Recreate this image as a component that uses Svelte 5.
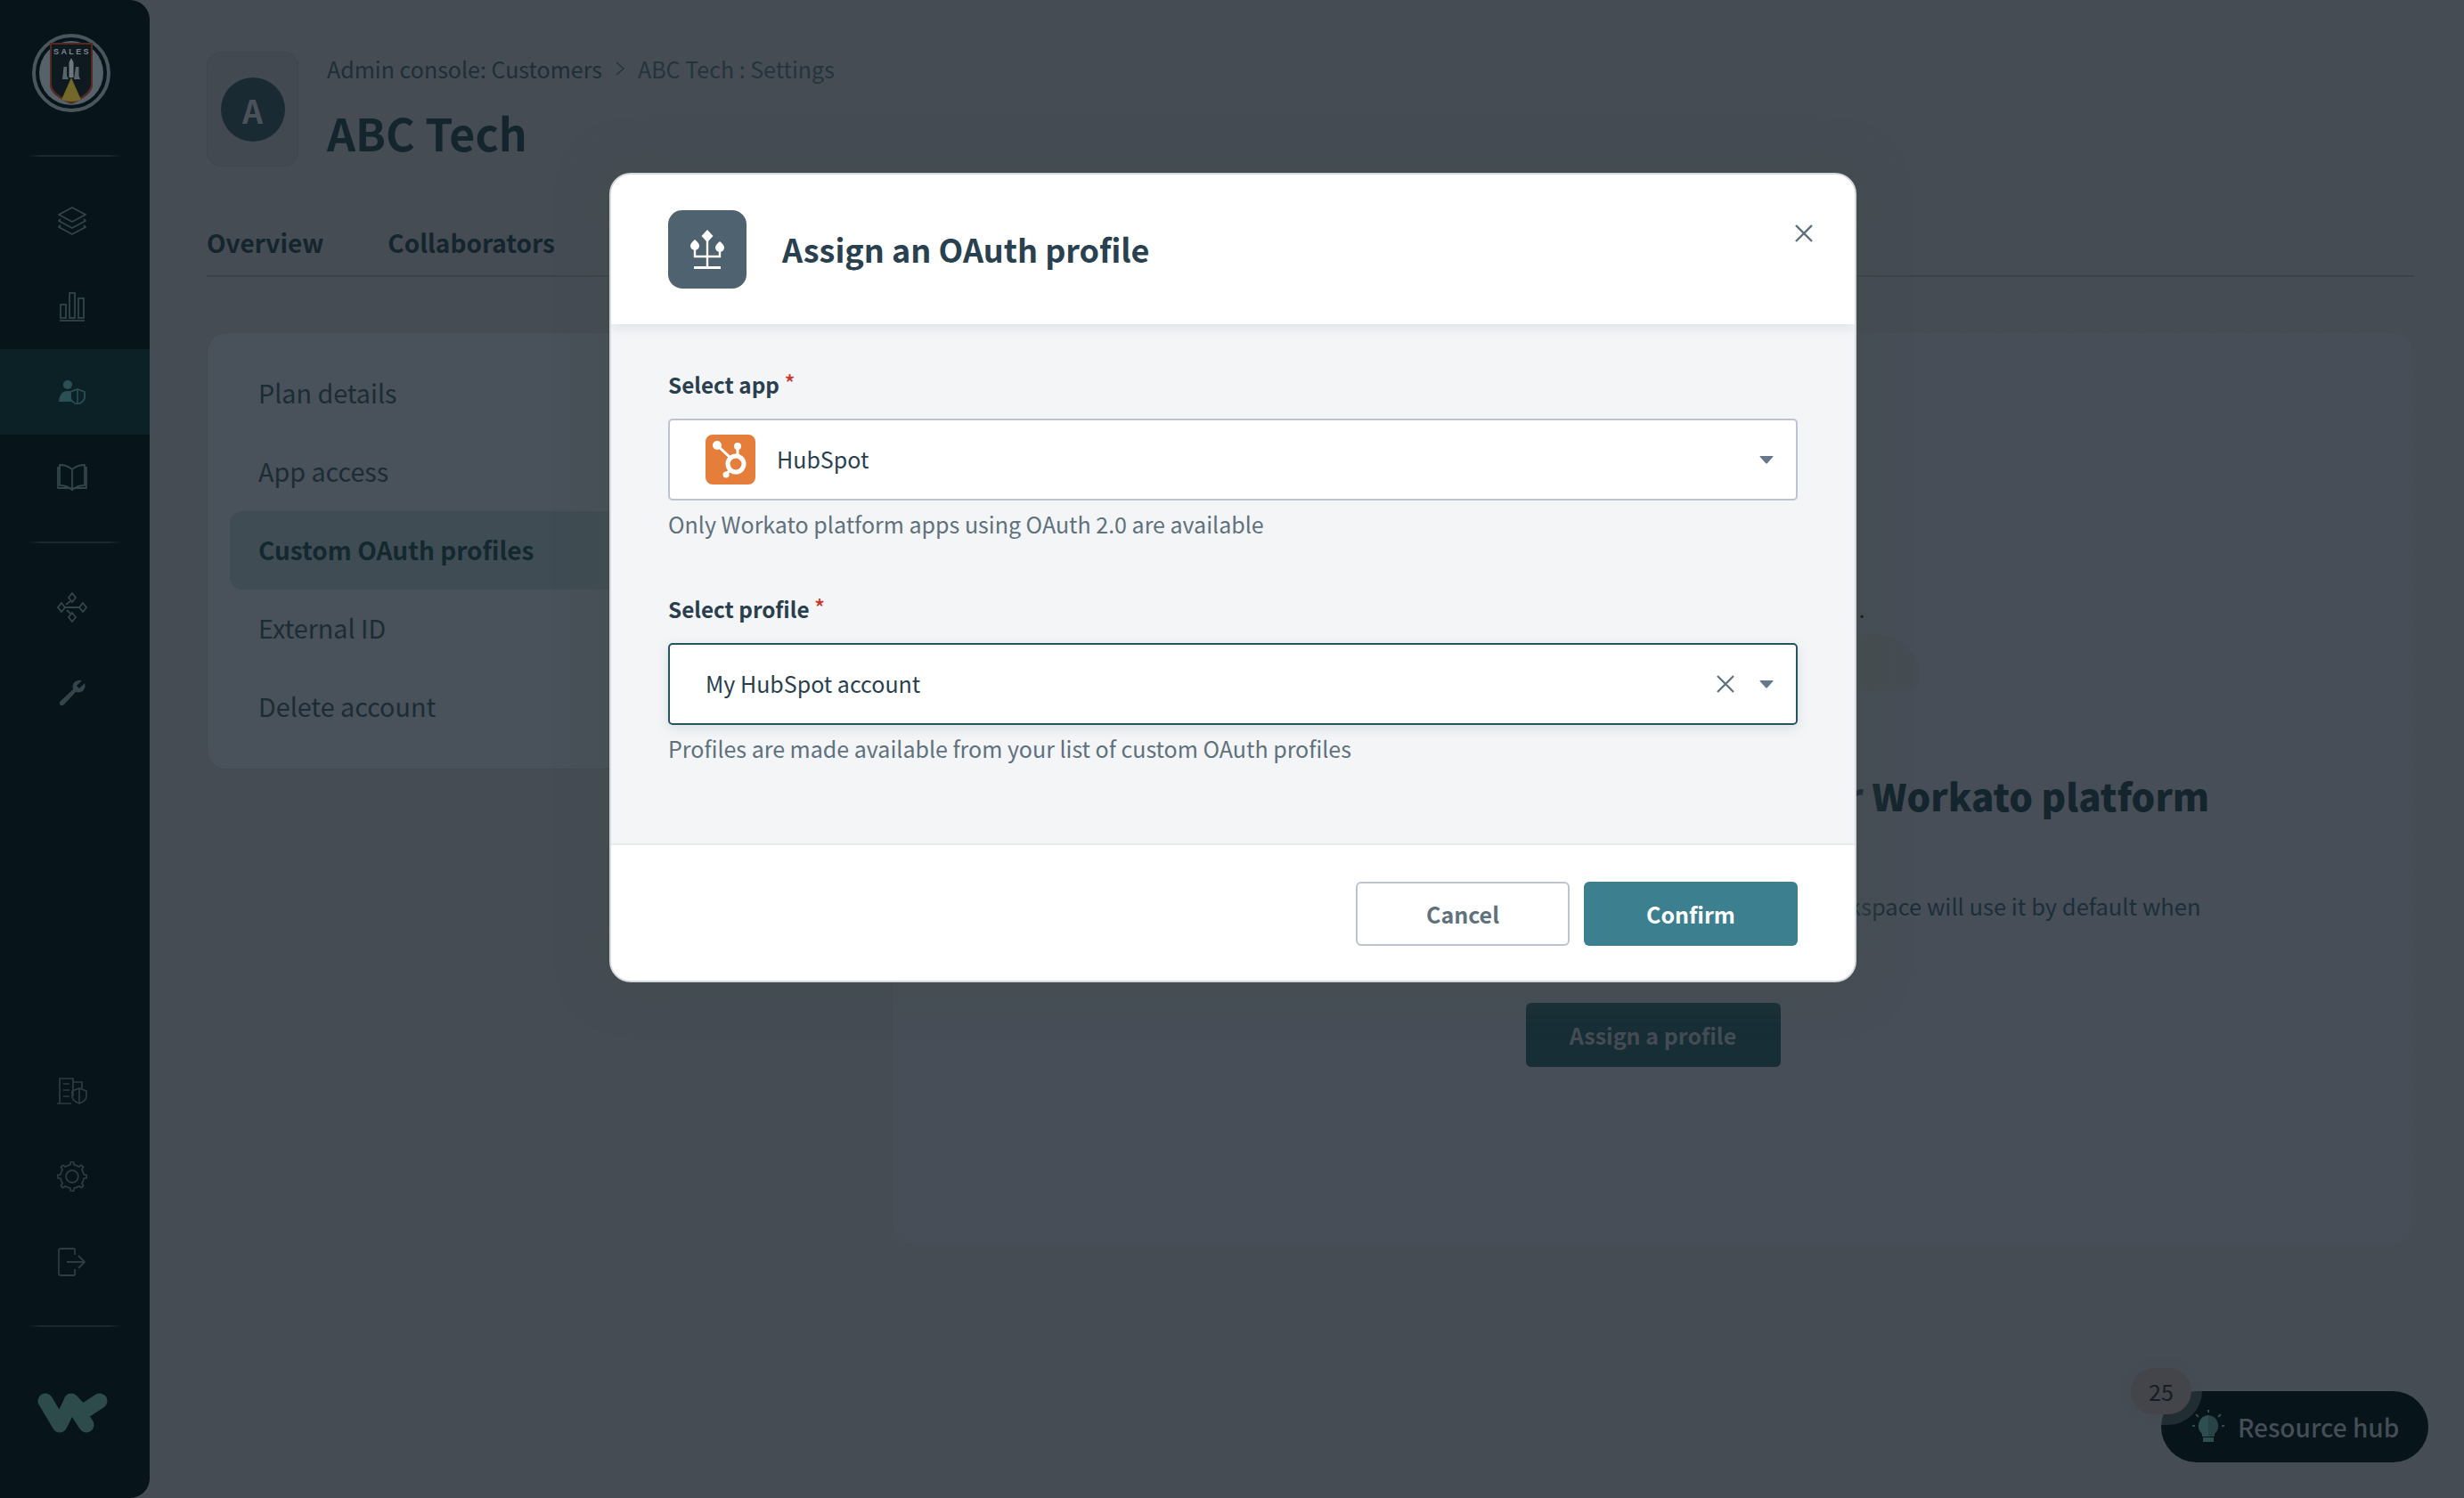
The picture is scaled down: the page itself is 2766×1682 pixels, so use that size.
<script>
  const menu = [
    { label: 'Plan details' },
    { label: 'App access' },
    { label: 'Custom OAuth profiles', active: true },
    { label: 'External ID' },
    { label: 'Delete account' }
  ];

  function gear(cx, cy, r1, r2, teeth) {
    const pts = [];
    for (let i = 0; i < teeth; i++) {
      const a = (i / teeth) * Math.PI * 2;
      const s = (Math.PI * 2) / teeth;
      [[-0.5, r1], [-0.22, r1], [-0.12, r2], [0.12, r2], [0.22, r1]].forEach(([o, r]) => {
        const t = a + o * s;
        pts.push((cx + Math.cos(t) * r).toFixed(1) + ' ' + (cy + Math.sin(t) * r).toFixed(1));
      });
    }
    return 'M' + pts.join('L') + 'Z';
  }
  const gearPath = gear(16, 16, 12.5, 15.5, 8);
</script>

<div class="app">
  <aside class="side">
    <div class="logo-wrap">
      <svg class="logo" width="90" height="90" viewBox="0 0 90 90">
        <circle cx="45" cy="45" r="42" fill="none" stroke="#4a565d" stroke-width="4"/>
        <circle cx="45" cy="45" r="36" fill="#56616a"/>
        <path d="M21 11H69V58Q69 70 45 80Q21 70 21 58Z" fill="#54291f"/>
        <path d="M23 13H67V57Q67 68 45 77Q23 68 23 57Z" fill="#0e1a20"/>
        <path d="M45 50L56 75Q45 79 34 75Z" fill="#75672a"/>
        <path d="M45 28L47.500 33V50H42.500V33Z" fill="#6d777d"/>
        <path d="M36.500 38H40V48L42 52H35ZM50 38H53.500V48L55 52H48Z" fill="#596369"/>
        <text x="46" y="24" class="sales">SALES</text>
      </svg>
    </div>
    <div class="rule"></div>
    <nav class="group">
      <div class="ico">
        <svg width="34" height="34" viewBox="0 0 34 34" fill="none" stroke="#33444a" stroke-width="1.8" stroke-linejoin="round">
          <path d="M17 2L32 10L17 18L2 10Z"/><path d="M4 15L2 17L17 25L32 17L30 15"/><path d="M4 22L2 24L17 32L32 24L30 22"/>
        </svg>
      </div>
      <div class="ico">
        <svg width="30" height="34" viewBox="0 0 30 34" fill="none" stroke="#33444a" stroke-width="1.8">
          <rect x="2" y="15" width="6" height="15"/><rect x="12" y="2" width="6" height="28"/><rect x="22" y="8" width="6" height="22"/><path d="M1 33H29"/>
        </svg>
      </div>
      <div class="ico active">
        <svg width="32" height="28" viewBox="0 0 32 28">
          <circle cx="11" cy="6" r="5" fill="#2b5054"/>
          <path d="M1 25Q2 13 11 13Q16 13 18 15V25Z" fill="#2b5054"/>
          <path d="M22 11L30 14V20Q30 25 22 28Q14 25 14 20V14Z" fill="#0c2125" stroke="#2b5054" stroke-width="1.8"/>
          <path d="M22 12V27" stroke="#2b5054" stroke-width="1.6"/>
        </svg>
      </div>
      <div class="ico">
        <svg width="34" height="32" viewBox="0 0 34 32" fill="none" stroke="#33444a" stroke-width="1.8" stroke-linejoin="round">
          <path d="M17 7Q11 2 3 2V5H1V28H14Q16 28 17 30Q18 28 20 28H33V5H31V2Q23 2 17 7V30"/><path d="M3 5V25Q11 25 17 30Q23 25 31 25V5"/>
        </svg>
      </div>
    </nav>
    <div class="rule mid"></div>
    <nav class="group">
      <div class="ico">
        <svg width="34" height="34" viewBox="0 0 34 34" fill="none" stroke="#33444a" stroke-width="1.8">
          <path d="M5 12L9 17L5 22L1 17ZM29 12L33 17L29 22L25 17ZM17 1L21 6L17 11L13 6ZM17 23L21 28L17 33L13 28Z"/><path d="M9 17H25M15 10L10 14M11 20L15 24"/>
        </svg>
      </div>
      <div class="ico">
        <svg width="32" height="30" viewBox="0 0 32 30">
          <path d="M2 25L17 11Q15 4 21 1.500Q24 0.500 27 1L21 7L24 10L30 4Q32 10 27 13.500Q23 15 20 14L6 29Q1 30 2 25Z" fill="#33444a"/>
        </svg>
      </div>
    </nav>
    <nav class="group bottom">
      <div class="ico">
        <svg width="34" height="32" viewBox="0 0 34 32" fill="none" stroke="#2e3c42" stroke-width="1.7">
          <path d="M3 30V2H18V22M0 30H16M7 8H14M7 15H14M7 22H14M18 6H28V13"/>
          <path d="M25 13L33 16V22Q33 27 25 30Q17 27 17 22V16Z"/><path d="M25 14V29"/>
        </svg>
      </div>
      <div class="ico">
        <svg width="34" height="34" viewBox="0 0 32 32" fill="none" stroke="#2e3c42" stroke-width="1.7" stroke-linejoin="round">
          <path d={gearPath}/><circle cx="16" cy="16" r="6.500"/>
        </svg>
      </div>
      <div class="ico">
        <svg width="32" height="32" viewBox="0 0 32 32" fill="none" stroke="#2e3c42" stroke-width="1.8" stroke-linejoin="round">
          <path d="M19 1H3Q1 1 1 3V29Q1 31 3 31H19M19 1V8M19 24V31M10 16H30M23 9L30 16L23 23"/>
        </svg>
      </div>
    </nav>
    <div class="rule low"></div>
    <div class="brand">
      <svg width="80" height="46" viewBox="0 0 80 46" fill="none" stroke="#2d4b4b" stroke-width="17" stroke-linecap="round" stroke-linejoin="round">
        <path d="M9 9L25 36L38 10L55 36"/><path d="M38 9L50 22L70 9"/>
      </svg>
    </div>
  </aside>

  <main class="main">
    <header class="head">
      <div class="tile"><span class="avatar">A</span></div>
      <div class="titles">
        <div class="crumbs">
          <span>Admin console: Customers</span>
          <svg width="12" height="18" viewBox="0 0 12 18" fill="none" stroke="#26343c" stroke-width="1.6"><path d="M2 2L10 9L2 16"/></svg>
          <span class="crumb-end">ABC Tech : Settings</span>
        </div>
        <h1>ABC Tech</h1>
      </div>
    </header>

    <div class="tabs">
      <span>Overview</span>
      <span>Collaborators</span>
    </div>

    <div class="panes">
      <ul class="menu">
        {#each menu as item}
          <li class:on={item.active}>{item.label}</li>
        {/each}
      </ul>
      <section class="detail">
        <div class="illus-text">Custom OAuth profiles for apps ..</div>
        <div class="illus"></div>
        <h2>Assign the custom OAuth profile for your Workato platform</h2>
        <p>workspace will use it by default when</p>
        <button class="assign">Assign a profile</button>
      </section>
    </div>
  </main>

  <div class="hub">
    <span class="count">25</span>
    <svg width="38" height="38" viewBox="0 0 38 38">
      <path d="M19 6A12 12 0 0 1 26 27V30H19Z" fill="#284346"/>
      <path d="M19 6A12 12 0 0 0 12 27V30H19Z" fill="#2e4f52"/>
      <rect x="13" y="31" width="12" height="5" fill="#2e4f52"/>
      <path d="M19 0V3M5 5L8 8M33 5L30 8M1 18H4M34 18H37" stroke="#2e4f52" stroke-width="2"/>
    </svg>
    <span>Resource hub</span>
  </div>

  <div class="modal" role="dialog">
    <header class="m-head">
      <div class="m-ico">
        <svg width="88" height="88" viewBox="0 0 88 88" fill="none" stroke="#fff" stroke-width="2.400">
          <path d="M44 22L50.500 29L44 36L37.500 29Z" fill="#fff" stroke="none"/>
          <path d="M44 34V64"/>
          <path d="M29 64.500H59" stroke-width="3"/>
          <path d="M30 42V52H44M58 44V52H44"/>
          <path d="M30 33Q35 37 35 40A5 5 0 0 1 25 40Q25 37 30 33Z" fill="#fff" stroke="none"/>
          <path d="M58 35Q63 39 63 42A5 5 0 0 1 53 42Q53 39 58 35Z" fill="#fff" stroke="none"/>
        </svg>
      </div>
      <h3>Assign an OAuth profile</h3>
      <svg class="close" width="20" height="20" viewBox="0 0 20 20" stroke="#5f717d" stroke-width="2.400"><path d="M1 1L19 19M19 1L1 19"/></svg>
    </header>
    <div class="m-body">
      <div class="field">
        <div class="label">Select app <b>*</b></div>
        <div class="select">
          <svg class="hs" width="56" height="56" viewBox="0 0 56 56">
            <rect width="56" height="56" rx="8" fill="#e57e3a"/>
            <g stroke="#fff" fill="none">
              <circle cx="34" cy="33" r="9" stroke-width="5"/>
              <path d="M36 13V24M13 12L28 26M23 44L29 39" stroke-width="3"/>
            </g>
            <circle cx="36" cy="13" r="4" fill="#fff"/>
            <circle cx="13" cy="12" r="5" fill="#fff"/>
            <circle cx="23" cy="45" r="3.500" fill="#fff"/>
          </svg>
          <span class="val">HubSpot</span>
          <svg class="caret" width="16" height="9" viewBox="0 0 16 9"><path d="M1 0H15Q16 0 15.300 1L9 8Q8 9 7 8L.7 1Q0 0 1 0Z" fill="#66788a"/></svg>
        </div>
        <div class="help">Only Workato platform apps using OAuth 2.0 are available</div>
      </div>
      <div class="field">
        <div class="label">Select profile <b>*</b></div>
        <div class="select focus">
          <span class="val">My HubSpot account</span>
          <svg class="clear" width="20" height="20" viewBox="0 0 20 20" stroke="#5f717d" stroke-width="2.200"><path d="M1 1L19 19M19 1L1 19"/></svg>
          <svg class="caret" width="16" height="9" viewBox="0 0 16 9"><path d="M1 0H15Q16 0 15.300 1L9 8Q8 9 7 8L.7 1Q0 0 1 0Z" fill="#66788a"/></svg>
        </div>
        <div class="help">Profiles are made available from your list of custom OAuth profiles</div>
      </div>
    </div>
    <footer class="m-foot">
      <button class="cancel">Cancel</button>
      <button class="confirm">Confirm</button>
    </footer>
  </div>
</div>

<style>
  :global(body) {
    margin: 0;
    background: #454c54;
  }
  * {
    box-sizing: border-box;
  }
  .app {
    position: relative;
    display: flex;
    width: 2766px;
    height: 1682px;
    overflow: hidden;
    background: #454c54;
    font-family: "Noto Sans CJK SC", "Noto Sans", sans-serif;
    font-size: 25px;
    color: #1c2c34;
  }
  .side {
    flex: none;
    width: 168px;
    height: 100%;
    display: flex;
    flex-direction: column;
    background: #07141a;
    border-radius: 0 22px 22px 0;
  }
  .logo-wrap {
    height: 174px;
    padding: 37px 0 0 35px;
  }
  .logo {
    display: block;
  }
  .sales {
    font-family: "Liberation Sans", sans-serif;
    font-size: 9px;
    font-weight: 700;
    letter-spacing: 2.400px;
    text-anchor: middle;
    fill: #7d878d;
  }
  .rule {
    flex: none;
    height: 2px;
    margin: 0 30px 0 30px;
    background: linear-gradient(90deg, transparent, #1b282e 15%, #1b282e 85%, transparent);
  }
  .group {
    display: flex;
    flex-direction: column;
    padding-top: 24px;
  }
  .rule.mid {
    margin-top: 24px;
  }
  .group.bottom {
    margin-top: auto;
    padding-top: 0;
  }
  .ico {
    height: 96px;
    display: flex;
    align-items: center;
    justify-content: center;
    padding-right: 6px;
  }
  .ico.active {
    background: #0c2125;
  }
  .rule.low {
    margin-top: 23px;
  }
  .brand {
    height: 192px;
    padding: 74px 0 0 42px;
  }
  .brand svg {
    display: block;
  }

  .main {
    flex: 1;
    min-width: 0;
    padding: 58px 56px 0 64px;
  }
  .head {
    display: flex;
    gap: 32px;
    height: 129px;
  }
  .tile {
    flex: none;
    width: 103px;
    height: 129px;
    display: flex;
    align-items: center;
    justify-content: center;
    background: #424950;
    border: 1px solid #3f464d;
    border-radius: 16px;
  }
  .avatar {
    width: 72px;
    height: 72px;
    border-radius: 50%;
    display: flex;
    align-items: center;
    justify-content: center;
    background: #1a2a32;
    color: #4a5158;
    font-size: 36px;
    font-weight: 600;
  }
  .crumbs {
    display: flex;
    align-items: center;
    gap: 14px;
    height: 38px;
    color: #1f2e36;
  }
  .crumb-end {
    color: #25343c;
  }
  h1 {
    margin: 20px 0 0;
    font-size: 50px;
    line-height: 64px;
    font-weight: 700;
    color: #14252d;
  }
  .tabs {
    display: flex;
    gap: 72px;
    height: 124px;
    padding-top: 60px;
    border-bottom: 2px solid #3c444b;
    font-size: 28px;
    line-height: 50px;
    font-weight: 700;
    color: #14252d;
  }
  .panes {
    display: flex;
    gap: 44px;
    margin-top: 62px;
  }
  .menu {
    flex: none;
    width: 725px;
    height: 491px;
    margin: 0;
    padding: 24px 0 0 25px;
    list-style: none;
    background: #49515a;
    border: 1px solid #434a52;
    border-radius: 22px;
    color: #1c2c34;
    font-size: 28.700px;
  }
  .menu li {
    height: 88px;
    padding-left: 32px;
    line-height: 86px;
    border-radius: 14px;
  }
  .menu li.on {
    background: #3f4c53;
    color: #13282f;
    font-size: 28px;
    font-weight: 700;
  }
  .detail {
    flex: 1;
    min-width: 0;
    height: 1025px;
    padding-top: 290px;
    display: flex;
    flex-direction: column;
    align-items: center;
    background: #474e57;
    border: 1px dashed #434a52;
    border-radius: 24px;
  }
  .illus-text {
    width: 480px;
    height: 49px;
    line-height: 40px;
    text-align: right;
    white-space: nowrap;
    color: #050a0d;
    font-size: 24px;
    letter-spacing: 2px;
    overflow: hidden;
  }
  .illus {
    width: 598px;
    height: 62px;
    background: #454d52;
    border-radius: 0 50px 14px 14px;
  }
  h2 {
    margin: 88px 0 0;
    font-size: 42px;
    line-height: 60px;
    font-weight: 900;
    color: #14252d;
    white-space: nowrap;
  }
  .detail p {
    width: 1230px;
    margin: 74px 0 0;
    line-height: 40px;
    font-size: 25.500px;
    text-align: right;
    white-space: nowrap;
    color: #1c2f39;
  }
  .assign {
    margin-top: 89px;
    width: 286px;
    height: 72px;
    border: 0;
    border-radius: 6px;
    background: #172e36;
    color: #454c54;
    font: 700 25px "Noto Sans CJK SC", sans-serif;
  }

  .hub {
    position: absolute;
    left: 2426px;
    top: 1562px;
    width: 300px;
    height: 80px;
    display: flex;
    align-items: center;
    gap: 14px;
    padding-left: 34px;
    border-radius: 40px;
    background: #07141a;
    color: #454e56;
    font-size: 28px;
    font-weight: 500;
  }
  .count {
    position: absolute;
    left: -34px;
    top: -26px;
    width: 68px;
    height: 52px;
    display: flex;
    align-items: center;
    justify-content: center;
    border-radius: 26px;
    background: #43454b;
    box-shadow: 0 0 0 12px rgba(66, 76, 80, .45);
    color: #161d24;
    font-size: 25px;
    font-weight: 400;
  }

  .modal {
    position: absolute;
    left: 684px;
    top: 194px;
    width: 1400px;
    height: 909px;
    display: flex;
    flex-direction: column;
    background: #fff;
    border-radius: 24px;
    border: 2px solid #d3d9de;
    overflow: hidden;
    box-shadow: 0 0 50px 10px rgba(66, 78, 74, .45);
    color: #2a3f4e;
  }
  .m-head {
    position: relative;
    flex: none;
    height: 168px;
    display: flex;
    align-items: center;
    gap: 40px;
    padding-left: 64px;
    background: #fff;
    box-shadow: 0 4px 12px rgba(60, 70, 80, .1);
  }
  .m-ico {
    width: 88px;
    height: 88px;
    border-radius: 16px;
    background: #4e6270;
  }
  .m-ico svg {
    display: block;
  }
  h3 {
    margin: 0;
    font-size: 36px;
    font-weight: 700;
    color: #29404f;
    position: relative;
    top: -1px;
  }
  .close {
    position: absolute;
    left: 1329px;
    top: 56px;
  }
  .m-body {
    flex: 1;
    padding: 48px 64px 0;
    background: #f3f5f7;
    border-bottom: 2px solid #e6eaee;
  }
  .field {
    margin-bottom: 54px;
  }
  .label {
    height: 40px;
    line-height: 34px;
    font-size: 24.300px;
    font-weight: 700;
    color: #2a3f4e;
  }
  .label b {
    color: #c8392b;
    font-weight: 500;
    font-size: 25px;
    vertical-align: 2px;
  }
  .select {
    display: flex;
    align-items: center;
    height: 92px;
    margin-top: 18px;
    padding: 0 25px 0 40px;
    background: #fff;
    border: 2px solid #bcc5cd;
    border-radius: 5px;
  }
  .select.focus {
    border-color: #24565f;
    box-shadow: 0 4px 14px rgba(60, 70, 80, .12);
  }
  .hs {
    flex: none;
    margin-right: 24px;
  }
  .val {
    flex: 1;
    padding-bottom: 3px;
  }
  .clear {
    margin-right: 28px;
  }
  .help {
    margin-top: 7px;
    height: 41px;
    line-height: 38px;
    color: #5f717d;
  }
  .m-foot {
    flex: none;
    height: 152px;
    display: flex;
    justify-content: flex-end;
    gap: 16px;
    padding: 41px 64px 0 0;
    background: #fff;
  }
  .m-foot button {
    width: 240px;
    height: 72px;
    border-radius: 6px;
    font: 700 25px "Noto Sans CJK SC", sans-serif;
  }
  .cancel {
    background: #fff;
    border: 2px solid #bcc5cd;
    color: #5f717d;
  }
  .confirm {
    background: #3c7f8e;
    border: 0;
    color: #fff;
  }
</style>
